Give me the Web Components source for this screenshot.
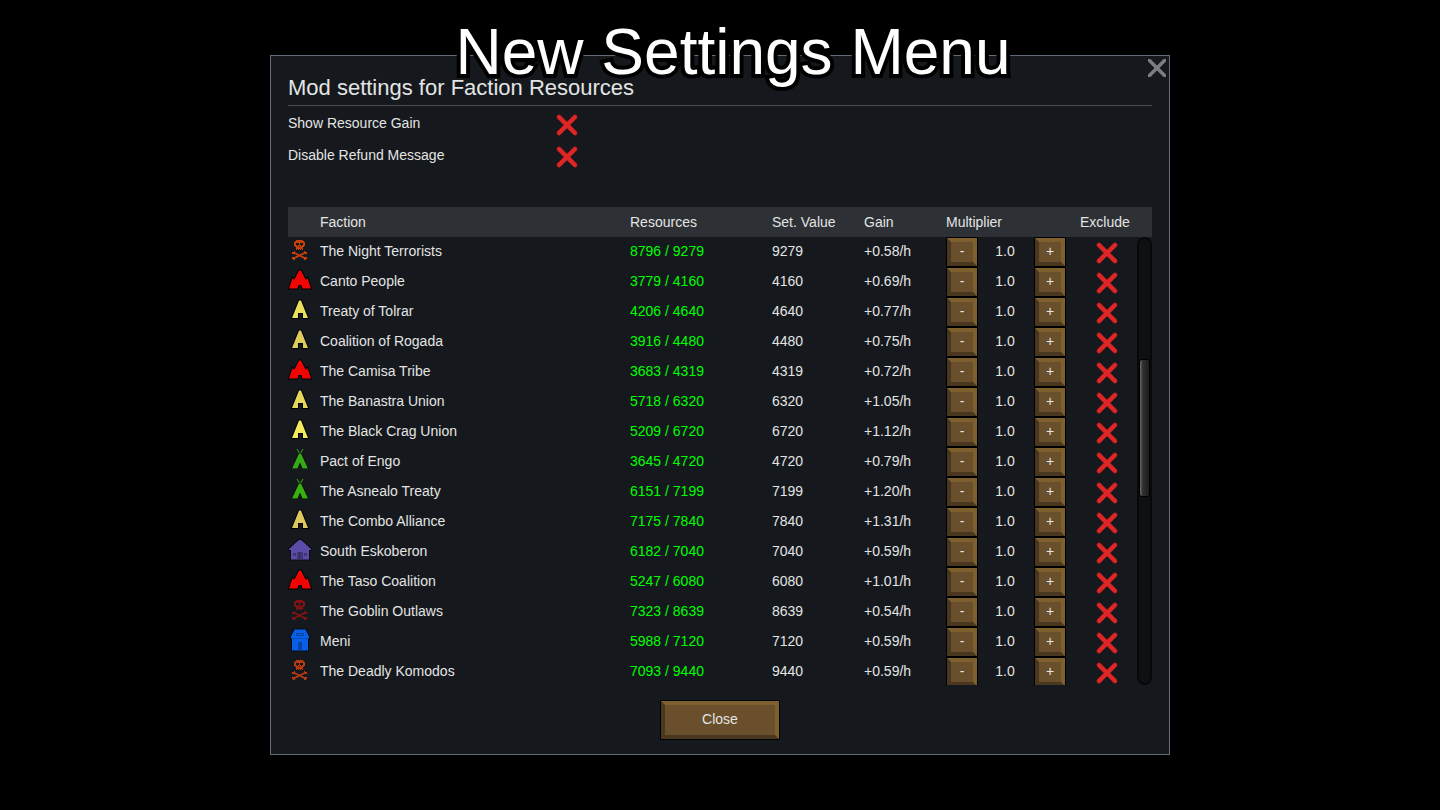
<!DOCTYPE html>
<html lang="en">
<head>
<meta charset="utf-8">
<meta name="viewport" content="width=device-width, initial-scale=1">
<title>Faction Resources settings</title>
<style>
  body { margin: 0; background: #000; color: #e4e4e4; font: 14px/16px "Liberation Sans", Arial, sans-serif; }
</style>
</head>
<body>
<settings-page></settings-page>

<script>
const define = (name, html, setup) => {
  const template = document.createElement('template');
  template.innerHTML = html;
  customElements.define(name, class extends HTMLElement {
    constructor() {
      super();
      this.attachShadow({ mode: 'open' }).append(template.content.cloneNode(true));
    }
    connectedCallback() { if (setup) setup(this, this.shadowRoot); }
  });
};

/* Bevelled wooden button */
define('wood-button', `
  <style>
    :host { display: inline-block; box-sizing: border-box; border: 1px solid #000; }
    button {
      display: block; box-sizing: border-box; width: 100%; height: 100%; margin: 0; padding: 0 0 2px;
      border: 4px solid; border-color: #7e602f #7e602f #493720 #493720;
      background: #694f2b; color: #e4e4e4; font: inherit; cursor: pointer;
    }
    button:hover { background: #7a5d34; }
  </style>
  <button type="button"><slot></slot></button>
`, (host, root) => {
  const label = host.getAttribute('label');
  if (label) root.querySelector('button').setAttribute('aria-label', label);
});

/* Tick box drawn as a red cross when off, a green tick when on */
define('cross-toggle', `
  <style>
    :host { display: block; }
    label { display: flex; align-items: flex-start; cursor: pointer; }
    .text { flex: 1; line-height: 32px; }
    .box { position: relative; width: 24px; height: 24px; }
    :host([spaced]) .box { margin-top: 6px; }
    input { position: absolute; inset: 0; width: 100%; height: 100%; margin: 0; opacity: 0; }
    svg { display: block; width: 24px; height: 24px; fill: none; stroke-linecap: round; }
    .on, input:checked ~ .off { display: none; }
    input:checked ~ .on { display: block; }
  </style>
  <label>
    <span class="text"><slot></slot></span>
    <span class="box">
      <input type="checkbox">
      <svg class="off" viewBox="0 0 24 24"><path d="M4 4L20 20M20 4L4 20" stroke="#7d1a1c" stroke-width="5"/><path d="M4 4L20 20M20 4L4 20" stroke="#de2626" stroke-width="4"/></svg>
      <svg class="on" viewBox="0 0 24 24"><path d="M4 13L9 19L20 5" stroke="#35b335" stroke-width="4"/></svg>
    </span>
  </label>
`, (host, root) => {
  const label = host.getAttribute('label');
  if (label) root.querySelector('input').setAttribute('aria-label', label);
});

const SHAPES = {
  skull: `<path fill="currentColor" fill-rule="evenodd" d="M7 1h7v1h1v1h1v4h-1v1h-1v3h-1v-1h-1v1h-1v-1h-1v1H9v-1H8v1H7V8H6V7H5V3h1V2h1zM7 4v2h1v1h1V6h1V4zM11 4v2h1v1h1V6h1V4zM10 7v1h1V7z"/>
    <path fill="none" stroke="currentColor" stroke-width="1.800" d="M4.500 13.500L16.500 19.500M16.500 13.500L4.500 19.500"/>
    <path fill="currentColor" d="M3 13h2v-1h1v3H3zM15 12h1v1h2v2h-3zM3 18h3v3H4v-1H3zM15 18h3v2h-1v1h-2z"/>`,
  camp: `<path fill="currentColor" stroke="#000" stroke-width="2" paint-order="stroke" d="M10 1.500h2l4.500 9h1l1-1.500 3.500 10.500H13.500l-1-3.500h-3l-1 3.500H0L3.500 9l1 1.500h1z"/>`,
  tent: `<path fill="currentColor" stroke="#000" stroke-width="2" paint-order="stroke" d="M10 1.500h2l7 17.500h-5v-5h-5v5H3z"/>`,
  tipi: `<path fill="none" stroke="currentColor" d="M8 0l3.500 6M14 0l-3.500 6"/>
    <path fill="currentColor" stroke="#000" stroke-width="1" paint-order="stroke" d="M10 4.500h2l7 15h-5.500l-2.500-6-2.500 6H3z"/>`,
  house: `<path fill="currentColor" stroke="#0c0b16" stroke-width="2" paint-order="stroke" d="M10 1h2l10 9v1h-2v9.500H2V11H0v-1z"/>
    <path fill="#000" opacity=".3" d="M8 13h6v7H8zM4 14h3v3H4zM15 14h3v3h-3z"/><path fill="#000" opacity=".2" d="M10 13h1v7h-1z"/>`,
  tower: `<path fill="currentColor" stroke="#040c18" stroke-width="2" paint-order="stroke" d="M5.500 0.500h11l3.500 7v2h-1v12H3v-12H2v-2z"/>
    <path fill="#000" opacity=".3" d="M7 4h8v3H7zM9 13h4v8H9z"/><path fill="currentColor" d="M8 5h6v1H8z"/><path fill="#000" opacity=".2" d="M3 9h16v1H3z"/>`
};

/* Faction emblem: kind picks the shape, tint the colour */
define('faction-icon', `
  <style>
    :host { display: block; width: 22px; height: 22px; }
    svg { display: block; width: 22px; height: 22px; overflow: visible; }
  </style>
  <svg viewBox="0 0 22 22" aria-hidden="true"></svg>
`, (host, root) => {
  const svg = root.querySelector('svg');
  svg.style.color = host.getAttribute('tint');
  svg.innerHTML = SHAPES[host.getAttribute('kind')];
});

define('multiplier-stepper', `
  <style>
    :host { display: flex; width: 120px; height: 30px; }
    wood-button { width: 32px; height: 30px; }
    output { flex: 1; padding-right: 2px; line-height: 28px; text-align: center; }
  </style>
  <wood-button label="Decrease multiplier">-</wood-button>
  <output></output>
  <wood-button label="Increase multiplier">+</wood-button>
`, (host, root) => {
  const output = root.querySelector('output');
  const [less, more] = root.querySelectorAll('wood-button');
  let value = Number(host.getAttribute('value'));
  const show = () => { output.textContent = value.toFixed(1); };
  less.addEventListener('click', () => { value = Math.max(0, value - 0.1); show(); });
  more.addEventListener('click', () => { value += 0.1; show(); });
  show();
});

const FACTIONS = [
  ['skull', '#c8400c', 'The Night Terrorists', '8796 / 9279', '9279', '+0.58/h'],
  ['camp', '#f00505', 'Canto People', '3779 / 4160', '4160', '+0.69/h'],
  ['tent', '#e8e05c', 'Treaty of Tolrar', '4206 / 4640', '4640', '+0.77/h'],
  ['tent', '#dfca5c', 'Coalition of Rogada', '3916 / 4480', '4480', '+0.75/h'],
  ['camp', '#f00505', 'The Camisa Tribe', '3683 / 4319', '4319', '+0.72/h'],
  ['tent', '#e4d75c', 'The Banastra Union', '5718 / 6320', '6320', '+1.05/h'],
  ['tent', '#f2ea5e', 'The Black Crag Union', '5209 / 6720', '6720', '+1.12/h'],
  ['tipi', '#38a818', 'Pact of Engo', '3645 / 4720', '4720', '+0.79/h'],
  ['tipi', '#38b010', 'The Asnealo Treaty', '6151 / 7199', '7199', '+1.20/h'],
  ['tent', '#dcc85c', 'The Combo Alliance', '7175 / 7840', '7840', '+1.31/h'],
  ['house', '#5c4ca8', 'South Eskoberon', '6182 / 7040', '7040', '+0.59/h'],
  ['camp', '#f00505', 'The Taso Coalition', '5247 / 6080', '6080', '+1.01/h'],
  ['skull', '#801414', 'The Goblin Outlaws', '7323 / 8639', '8639', '+0.54/h'],
  ['tower', '#0860e8', 'Meni', '5988 / 7120', '7120', '+0.59/h'],
  ['skull', '#b83810', 'The Deadly Komodos', '7093 / 9440', '9440', '+0.59/h']
];

define('scroll-track', `
  <style>
    :host { display: block; box-sizing: border-box; width: 15px; border: 2px solid #07080a; border-radius: 8px; background: #0e1113; }
    .thumb { box-sizing: border-box; height: 31%; border: 1px solid #000; border-radius: 3px; background: linear-gradient(90deg, #6a6a6a, #303030 30%, #1c1c1c); }
    .space { height: 27%; }
  </style>
  <div class="space"></div><div class="thumb"></div>
`);

define('faction-table', `
  <style>
    :host { display: block; position: relative; overflow: hidden; max-height: 478px; }
    table { width: 100%; table-layout: fixed; border-collapse: collapse; }
    th { height: 30px; padding: 0; background: #2d3034; font-weight: normal; text-align: left; }
    td { height: 28px; padding: 0 0 2px; white-space: nowrap; }
    td.control, td.icon { padding: 0; height: 30px; vertical-align: top; }
    .c-icon { width: 32px; } .c-res { width: 142px; } .c-set { width: 92px; }
    .c-gain { width: 82px; } .c-mult { width: 134px; } .c-ex { width: 72px; }
    .res { color: #00ff00; }
    faction-icon { margin: 2px 0 0 1px; }
    cross-toggle { width: 24px; margin: 4px 0 0 15px; }
    scroll-track { position: absolute; right: 0; top: 30px; bottom: 0; }
  </style>
  <table>
    <colgroup><col class="c-icon"><col><col class="c-res"><col class="c-set"><col class="c-gain"><col class="c-mult"><col class="c-ex"></colgroup>
    <thead><tr><th></th><th>Faction</th><th>Resources</th><th>Set. Value</th><th>Gain</th><th>Multiplier</th><th>Exclude</th></tr></thead>
    <tbody></tbody>
  </table>
  <scroll-track></scroll-track>
`, (host, root) => {
  root.querySelector('tbody').innerHTML = FACTIONS.map(([kind, tint, name, resources, set, gain]) => `
    <tr><td class="icon"><faction-icon kind="${kind}" tint="${tint}"></faction-icon></td><td>${name}</td>
    <td class="res">${resources}</td><td>${set}</td><td>${gain}</td>
    <td class="control"><multiplier-stepper value="1"></multiplier-stepper></td>
    <td class="control"><cross-toggle label="Exclude ${name}"></cross-toggle></td></tr>`).join('');
});

/* Framed window with a title, a corner close button, content and a footer */
define('mod-window', `
  <style>
    :host { display: block; position: relative; box-sizing: border-box; padding: 16px 17px 14px; border: 1px solid #616b7a; background: #15191d; }
    h2 { margin: 0; padding-bottom: 2px; border-bottom: 1px solid #4a4b50; font-size: 22px; line-height: 31px; font-weight: normal; }
    .corner { position: absolute; top: 3px; right: 3px; width: 18px; height: 18px; padding: 0; border: 0; background: none; cursor: pointer; }
    svg { display: block; }
    footer { display: flex; justify-content: center; padding-top: 15px; }
  </style>
  <h2><slot name="title"></slot></h2>
  <button class="corner" type="button" aria-label="Close window">
    <svg width="18" height="18" viewBox="0 0 18 18"><path d="M1 1L17 17M17 1L1 17" stroke="#7c7e81" stroke-width="3.500" stroke-linecap="square"/></svg>
  </button>
  <slot></slot>
  <footer><slot name="footer"></slot></footer>
`);

define('page-caption', `
  <style>
    :host { display: block; text-align: center; }
    h1 {
      margin: 0; padding-left: 26px; color: #fff; font-size: 64px; line-height: 72px; font-weight: normal;
      -webkit-text-stroke: 8px #000; paint-order: stroke fill; text-shadow: 0 2px 1px #000;
    }
  </style>
  <h1><slot></slot></h1>
`);

define('settings-page', `
  <style>
    :host { display: block; position: relative; padding: 55px 24px; }
    page-caption { position: absolute; top: 16px; left: 0; right: 0; z-index: 1; pointer-events: none; }
    mod-window { max-width: 900px; margin: 0 auto; }
    .options { max-width: 291px; padding: 1px 0 36px; }
    .close { width: 120px; height: 40px; }
  </style>
  <page-caption>New Settings Menu</page-caption>
  <mod-window>
    <span slot="title">Mod settings for Faction Resources</span>
    <div class="options">
      <cross-toggle spaced>Show Resource Gain</cross-toggle>
      <cross-toggle spaced>Disable Refund Message</cross-toggle>
    </div>
    <faction-table></faction-table>
    <wood-button class="close" slot="footer">Close</wood-button>
  </mod-window>
`);
</script>
</body>
</html>
